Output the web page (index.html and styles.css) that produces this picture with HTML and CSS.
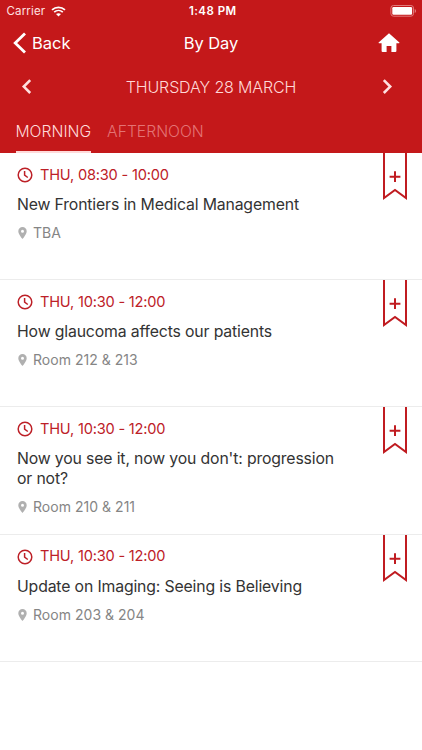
FILE: index.html
```html
<!DOCTYPE html>
<html lang="en">
<head>
<meta charset="utf-8">
<meta name="viewport" content="width=device-width, initial-scale=1">
<title>By Day</title>
<link rel="stylesheet" href="styles.css">
</head>
<body>
<svg class="defs" width="0" height="0" aria-hidden="true">
  <symbol id="clock" viewBox="0 0 16 16"><circle cx="8" cy="8" r="6.8"/><path d="M7.6 3.9V8.2L10.8 10.5"/></symbol>
  <symbol id="pin" viewBox="0 0 9 12"><path fill-rule="evenodd" d="M4.5 0A4.2 4.2 0 0 0 .3 4.2C.3 7.3 4.5 12 4.5 12S8.7 7.3 8.7 4.2A4.2 4.2 0 0 0 4.5 0ZM4.5 2.7A1.5 1.5 0 1 1 4.5 5.7A1.5 1.5 0 0 1 4.5 2.7Z"/></symbol>
  <symbol id="ribbon" viewBox="0 0 26 48"><path d="M2 0V45L13 37L24 45V0M13 18.3V29.1M7.6 23.7H18.4"/></symbol>
</svg>
<header class="header">
  <div class="status">
    <div class="carrier"><span>Carrier</span>
      <svg width="15" height="11" viewBox="0 0 15 11"><path class="wave" d="M1 3.9C4.8.4 10.2.4 14 3.9M3.2 6.2C5.7 3.9 9.3 3.9 11.8 6.2"/><path class="dot" d="M5 8.1Q7.5 6.2 10 8.1L7.5 10.6Z"/></svg>
    </div>
    <span class="clock-time">1:48 PM</span>
    <svg class="battery" width="27" height="12" viewBox="0 0 27 12"><rect class="shell" x=".9" y=".5" width="22.6" height="10.7" rx="2.6"/><rect x="2.3" y="2" width="19.8" height="7.7" rx="1.2" fill="#fff"/><path class="cap" d="M24.7 4V8Q26.1 7.3 26.1 6T24.7 4Z"/></svg>
  </div>
  <nav class="nav">
    <a class="back"><svg width="14" height="22" viewBox="0 0 14 22"><path d="M12 1.4L2.2 11L12 20.6"/></svg><span>Back</span></a>
    <h1>By Day</h1>
    <svg class="home" width="22" height="20" viewBox="0 0 22 20"><path d="M11 .3L.6 9.6Q.3 10.2 1 10.2H3.6V18Q3.6 19.1 4.6 19.1H8.6V13H13.4V19.1H17.4Q18.4 19.1 18.4 18V10.2H21Q21.7 10.2 21.4 9.6Z"/></svg>
  </nav>
  <div class="date">
    <svg width="12" height="16" viewBox="0 0 12 16"><path d="M9.2 1.2L2.8 7.6L9.2 14"/></svg>
    <span>THURSDAY 28 MARCH</span>
    <svg width="12" height="16" viewBox="0 0 12 16"><path d="M2.8 1.2L9.2 7.6L2.8 14"/></svg>
  </div>
  <div class="tabs"><span class="tab active">MORNING</span><span class="tab">AFTERNOON</span></div>
</header>
<main>
  <article class="session">
    <div class="time"><svg><use href="#clock"/></svg><span>THU, 08:30 - 10:00</span></div>
    <h2>New Frontiers in Medical Management</h2>
    <div class="room"><svg><use href="#pin"/></svg><span>TBA</span></div>
    <svg class="ribbon"><use href="#ribbon"/></svg>
  </article>
  <article class="session">
    <div class="time"><svg><use href="#clock"/></svg><span>THU, 10:30 - 12:00</span></div>
    <h2>How glaucoma affects our patients</h2>
    <div class="room"><svg><use href="#pin"/></svg><span>Room 212 &amp; 213</span></div>
    <svg class="ribbon"><use href="#ribbon"/></svg>
  </article>
  <article class="session">
    <div class="time"><svg><use href="#clock"/></svg><span>THU, 10:30 - 12:00</span></div>
    <h2>Now you see it, now you don't: progression or not?</h2>
    <div class="room"><svg><use href="#pin"/></svg><span>Room 210 &amp; 211</span></div>
    <svg class="ribbon"><use href="#ribbon"/></svg>
  </article>
  <article class="session">
    <div class="time"><svg><use href="#clock"/></svg><span>THU, 10:30 - 12:00</span></div>
    <h2>Update on Imaging: Seeing is Believing</h2>
    <div class="room"><svg><use href="#pin"/></svg><span>Room 203 &amp; 204</span></div>
    <svg class="ribbon"><use href="#ribbon"/></svg>
  </article>
</main>
</body>
</html>
```
FILE: styles.css
```css
* { box-sizing: border-box; }
body { margin: 0; height: 750px; overflow: hidden; background: #fff; font-family: Inter, "Liberation Sans", sans-serif; }
svg { display: block; flex: none; fill: none; }
.defs { position: absolute; }
h1, h2 { margin: 0; font-weight: 400; }
.header { height: 153px; background: #c4181a; color: #fff; }
.status { height: 22px; display: grid; grid-template-columns: 1fr auto 1fr; align-items: center; padding: 0 5px 0 6.5px; font-size: 11.5px; }
.carrier { display: flex; align-items: center; gap: 5.5px; color: #ffe1e1; letter-spacing: .15px; }
.wave { stroke: #fff; stroke-width: 1.7; }
.dot { fill: #fff; }
.clock-time { padding-left: 2px; font-weight: 600; font-size: 11.5px; letter-spacing: .45px; }
.battery { justify-self: end; }
.shell { stroke: #e27b7c; }
.cap { fill: #e27b7c; }
.nav { height: 42px; display: grid; grid-template-columns: 1fr auto 1fr; align-items: center; padding: 0 22px; }
.back { display: flex; align-items: center; gap: 5px; margin-left: -9px; font-size: 16.5px; font-weight: 370; }
.back path { stroke: #fff; stroke-width: 2.8; }
h1 { font-size: 16.5px; font-weight: 370; letter-spacing: -.1px; }
.home { justify-self: end; fill: #fff; }
.date { height: 45px; display: flex; justify-content: space-between; align-items: center; padding: 0 29px 0 21px; color: #ffd8d8; font-size: 16px; font-weight: 320; letter-spacing: -.13px; }
.date span { padding-left: 8px; }
.date path { stroke: #ffe0e0; stroke-width: 2.6; }
.tabs { height: 44px; display: flex; gap: 16px; padding-left: 15.5px; font-size: 15.7px; font-weight: 320; line-height: 46px; }
.tab { height: 44px; color: #e37374; }
.active { color: #ffdada; border-bottom: 2px solid #ffdada; }
.session { position: relative; height: 127.2px; border-bottom: 1px solid #ececec; padding: 13px 70px 0 17px; }
.time { height: 18px; display: flex; align-items: center; gap: 7px; color: #bd2027; font-size: 14.6px; letter-spacing: -.2px; line-height: 18px; }
.time svg { width: 16px; height: 16px; stroke: #bd2027; stroke-width: 1.5; }
.time span { padding-bottom: 1px; }
h2 { margin-top: 11px; color: #333; font-size: 15.8px; line-height: 19.5px; letter-spacing: -.15px; }
.room { margin-top: 9px; height: 18px; display: flex; align-items: center; gap: 6px; padding-left: 1px; color: #858585; font-size: 14px; letter-spacing: .03px; }
.room svg { width: 9px; height: 12px; margin-top: 1px; fill: #b0b0b0; }
.ribbon { position: absolute; right: 14px; top: 0; width: 26px; height: 48px; stroke: #c01c21; stroke-width: 2; }
```
